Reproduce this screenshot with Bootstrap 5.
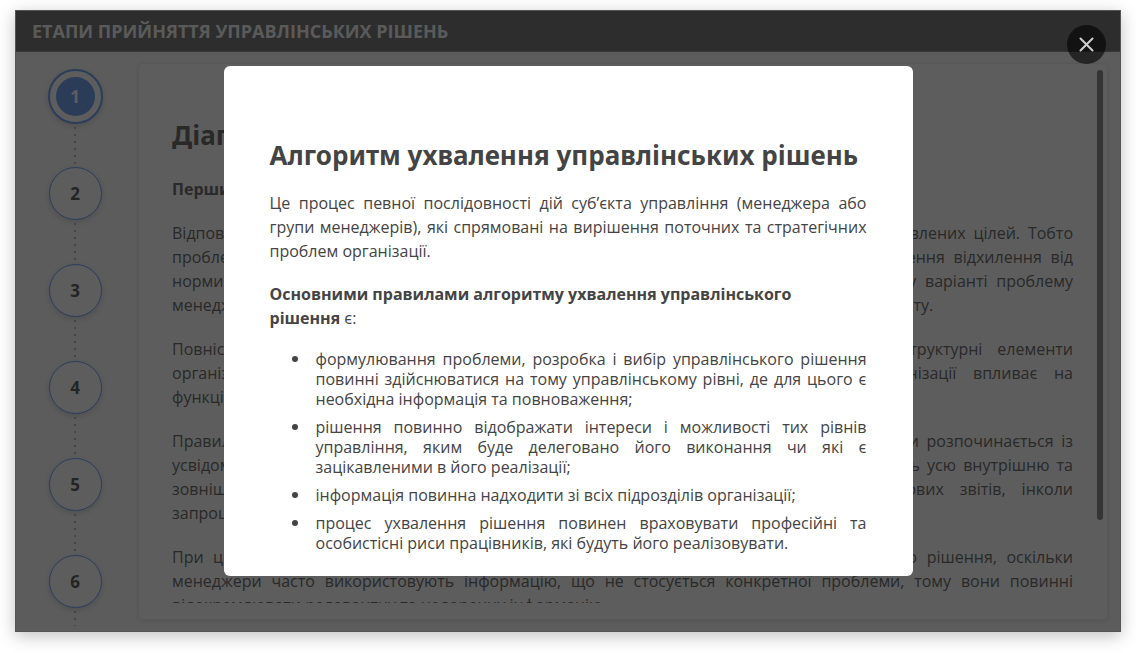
<!DOCTYPE html>
<html lang="uk">
<head>
<meta charset="utf-8">
<meta name="viewport" content="width=device-width, initial-scale=1">
<title>Етапи прийняття управлінських рішень</title>
<link href="https://cdn.jsdelivr.net/npm/bootstrap@5.3.0/dist/css/bootstrap.min.css" rel="stylesheet">
<style>
body{font-family:"Open Sans","Noto Sans",sans-serif;font-size:16px;line-height:24px;color:#444;background:#fff}
.page-wrap{height:100vh;padding:10px 15px 21px}
.lesson{border:1px solid #555;background:#fbfbfb;box-shadow:0 4px 16px rgba(0,0,0,.25)}
.lesson-bar{height:41px;padding:0 16px;background:#525252;border-bottom:1px solid #777}
.lesson-bar h1{font-size:18px;line-height:24px;font-weight:700;color:#f4f4f4}
.steps{width:118px;padding-top:17px}
.step{width:53px;height:53px;border:1px solid #4a8cf5;border-radius:50%;background:#fff;color:#333;font-weight:700;font-size:17px;box-shadow:0 2px 6px rgba(0,0,0,.2)}
.step.current{width:55px;height:55px;border-width:2px;padding:6px}
.step.current span{width:39px;height:39px;border-radius:50%;background:#4c8aec;color:#fff}
.dots{flex:none;height:44px;width:2px;background:linear-gradient(#aaa 2px,transparent 2px) 0 3px/2px 7px}
.step.current + .dots{height:43px}
.dots.last{height:18px}
.sheet{margin:11px 12px 11px 4px;padding:6px 4px 16px 33px;border:1px solid #eee;border-radius:5px;background:#fff;box-shadow:0 1px 5px rgba(0,0,0,.12)}
.sheet-text{padding:47px 24px 0 0}
.sheet-thumb{width:6px;height:450px;border-radius:3px;background:#707070}
h2{font-family:"Noto Sans",sans-serif;font-size:26px;line-height:36px;font-weight:700}
.prose p{margin-bottom:20px;text-align:justify}
.prose h2{margin-bottom:24px}
.shade{background:rgba(30,30,30,.72)}
.dialog-box{max-width:689px;border-radius:6px;padding:71px 46px 23px}
.dialog-box h2{margin-bottom:18px;white-space:nowrap}
.dialog-box p{margin-bottom:19px;text-align:justify}
.dialog-box ul{padding-left:46px;line-height:20px;text-align:justify;list-style:none}
.dialog-box li{position:relative;margin-bottom:8px}
.dialog-box li::before{content:"";position:absolute;left:-24px;top:7px;width:6px;height:6px;border-radius:50%;background:#444}
.dialog-box li:last-child{margin-bottom:0}
.closer{top:14px;right:14px;width:39px;height:39px;background:rgba(0,0,0,.6)}
</style>
</head>
<body>
<div class="page-wrap">
<main class="lesson position-relative d-flex flex-column h-100">
  <header class="lesson-bar d-flex align-items-center flex-shrink-0"><h1 class="m-0">ЕТАПИ ПРИЙНЯТТЯ УПРАВЛІНСЬКИХ РІШЕНЬ</h1></header>
  <div class="d-flex flex-grow-1 overflow-hidden">
    <nav class="steps d-flex flex-column align-items-center flex-shrink-0 overflow-hidden" aria-label="Етапи">
      <button class="step current d-flex align-items-center justify-content-center flex-shrink-0"><span class="d-flex align-items-center justify-content-center flex-shrink-0">1</span></button>
      <div class="dots"></div>
      <button class="step flex-shrink-0">2</button><div class="dots"></div>
      <button class="step flex-shrink-0">3</button><div class="dots"></div>
      <button class="step flex-shrink-0">4</button><div class="dots"></div>
      <button class="step flex-shrink-0">5</button><div class="dots"></div>
      <button class="step flex-shrink-0">6</button><div class="dots last"></div>
    </nav>
    <article class="sheet d-flex flex-grow-1">
      <div class="sheet-text prose flex-grow-1 overflow-hidden">
        <h2>Діагностика проблеми</h2>
        <p class="fw-bold">Перший етап ухвалення рішення</p>
        <p>Відповідно до сучасних підходів проблемою вважають ситуацію, коли не досягнуто поставлених цілей. Тобто проблема виникає за умови невідповідності фактичного стану до бажаного та встановлення відхилення від норми, визначеної показниками діяльності підприємства загалом чи підрозділу. У такому варіанті проблему менеджер повинен розглядати як потенційну можливість для покращення кінцевого результату.</p>
        <p>Повністю визначити проблему часто буває складно, оскільки всі її складові та структурні елементи організації&nbsp;взаємопов’язані між собою. Робота кожного окремого підрозділу організації впливає на функціонування&nbsp;інших підрозділів.</p>
        <p>Правильне визначення проблеми вважають половиною її розв’язання. Процес діагностики розпочинається із усвідомлення симптомів ускладнень. Для цього менеджери насамперед ретельно збирають усю внутрішню та зовнішню інформацію на підставі аналізу ринку праці, бухгалтерських та фінансових звітів, інколи запрошують&nbsp;сторонніх консультантів.</p>
        <p>При цьому важливо відбирати лише ту інформацію, яка необхідна для ухвалення цього рішення, оскільки менеджери часто використовують інформацію, що не стосується конкретної проблеми, тому вони повинні відокремлювати релевантну та недоречну інформацію.</p>
      </div>
      <div class="sheet-thumb flex-shrink-0"></div>
    </article>
  </div>
  <div class="shade position-absolute top-0 start-0 w-100 h-100 d-flex align-items-center justify-content-center">
    <section class="dialog-box bg-white w-100" role="dialog" aria-modal="true" aria-labelledby="dialog-title">
      <h2 id="dialog-title">Алгоритм ухвалення управлінських рішень</h2>
      <p>Це процес певної послідовності дій суб’єкта управління (менеджера або групи менеджерів), які спрямовані на вирішення поточних та стратегічних проблем організації.</p>
      <p class="text-start"><strong>Основними правилами алгоритму ухвалення управлінського рішення</strong>&nbsp;є:</p>
      <ul class="mb-0">
        <li>формулювання проблеми, розробка і вибір управлінського рішення повинні здійснюватися на тому управлінському рівні, де для цього є необхідна інформація та повноваження;</li>
        <li>рішення повинно відображати інтереси і можливості тих рівнів управління, яким буде делеговано його виконання чи які є зацікавленими в його реалізації;</li>
        <li>інформація повинна надходити зі всіх підрозділів організації;</li>
        <li>процес ухвалення рішення повинен враховувати професійні та особистісні риси працівників, які будуть його реалізовувати.</li>
      </ul>
    </section>
    <button class="closer position-absolute border-0 rounded-circle p-0 d-flex align-items-center justify-content-center" aria-label="Закрити">
      <svg width="15" height="15" viewBox="0 0 15 15" fill="none" stroke="#d0d0d0" stroke-width="2" stroke-linecap="round"><path d="M1.5 1.5l12 12M13.5 1.5l-12 12"/></svg>
    </button>
  </div>
</main>
</div>
<script src="https://cdn.jsdelivr.net/npm/bootstrap@5.3.0/dist/js/bootstrap.bundle.min.js"></script>
</body>
</html>
